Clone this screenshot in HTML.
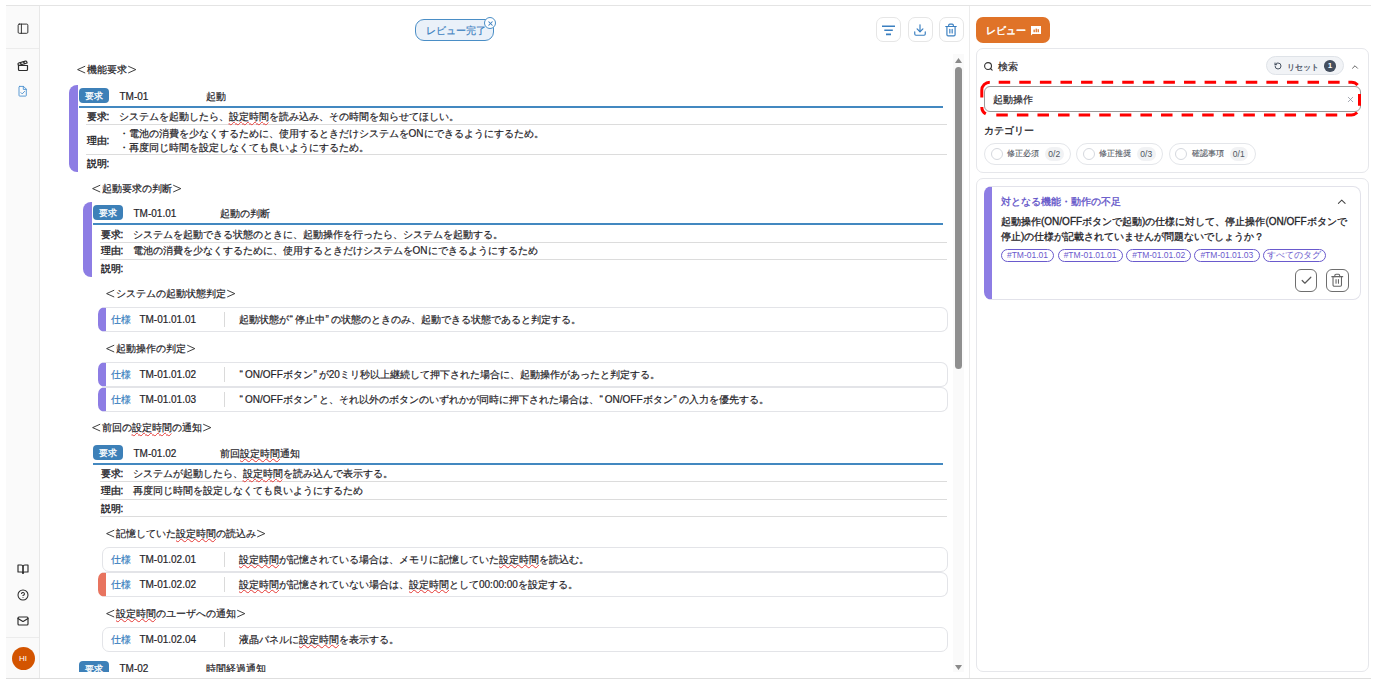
<!DOCTYPE html>
<html lang="ja">
<head>
<meta charset="utf-8">
<style>
*{box-sizing:border-box;margin:0;padding:0}
html,body{width:1377px;height:680px;overflow:hidden;background:#fff}
body{position:relative;font-family:"Liberation Sans",sans-serif;color:#1f2328;font-size:10px}
.a{position:absolute}
.t{position:absolute;white-space:nowrap;font-size:10px;line-height:12px;-webkit-text-stroke-width:0.2px}
.m{-webkit-text-stroke-width:0.4px}
svg.i{position:absolute;overflow:visible}
.br{display:inline-block;width:10px;height:12px;vertical-align:top}
.br svg{display:block}
.q{display:inline-block;width:6px;padding-left:0.6px}
.sq{text-decoration:underline wavy #e53935;text-decoration-thickness:1.2px;text-underline-offset:1px;text-decoration-skip-ink:none}
.badge{position:absolute;width:30px;height:15px;border-radius:4px;background:#3d80b8;color:#fff;font-size:9px;line-height:16px;text-align:center;-webkit-text-stroke-width:0.3px}
.card{position:absolute;height:25px;border:1px solid #e3e4e8;border-radius:7px;background:#fff}
</style>
</head>
<body>

<div class="a" style="left:6px;top:5px;width:1365px;height:1px;background:#e4e4e4"></div>
<div class="a" style="left:6px;top:678px;width:1365px;height:1px;background:#dedede"></div>
<div class="a" style="left:6px;top:6px;width:34px;height:672px;background:#fafafa;border-right:1px solid #e8e8e8"></div>
<div class="a" style="left:6px;top:48px;width:33px;height:1px;background:#ececec"></div>
<div class="a" style="left:6px;top:637px;width:33px;height:1px;background:#ececec"></div>
<div class="a" style="left:969px;top:6px;width:1px;height:672px;background:#ececec"></div>
<div class="a" style="left:0;top:0;width:964px;height:672px;overflow:hidden">
<div class="t" style="left:76.5px;top:64px;"><span class="br"><svg width="10" height="12"><path d="M8.2 2.2 L0.6 5.6 L8.2 9.0" fill="none" stroke="#2a2a2a" stroke-width="0.9"/></svg></span>機能要求<span class="br"><svg width="10" height="12"><path d="M1.2 2.2 L8.8 5.6 L1.2 9.0" fill="none" stroke="#2a2a2a" stroke-width="0.9"/></svg></span></div>
<div class="badge" style="left:79px;top:88px">要求</div>
<div class="t" style="left:119.5px;top:90.5px;">TM-01</div>
<div class="t" style="left:206px;top:90.5px;">起動</div>
<div class="a" style="left:79px;top:106px;width:863.5px;height:2px;background:#4388c0"></div>
<div class="a" style="left:86.0px;top:124px;width:860.5px;height:1px;background:#dcdcdc"></div>
<div class="a" style="left:86.0px;top:154px;width:860.5px;height:1px;background:#dcdcdc"></div>
<div class="t" style="left:86.5px;top:110.7px;-webkit-text-stroke-width:0.35px">要求:</div>
<div class="t" style="left:118.5px;top:110.7px;">システムを起動したら、<span class="sq">設定時間</span>を読み込み、その時間を知らせてほしい。</div>
<div class="t" style="left:86.5px;top:135px;-webkit-text-stroke-width:0.35px">理由:</div>
<div class="t" style="left:118.5px;top:128.4px;">・電池の消費を少なくするために、使用するときだけシステムをONにできるようにするため。</div>
<div class="t" style="left:118.5px;top:141.9px;">・再度同じ時間を設定しなくても良いようにするため。</div>
<div class="t" style="left:86.5px;top:158px;-webkit-text-stroke-width:0.35px">説明:</div>
<div class="a" style="left:69px;top:85px;width:9px;height:87px;background:#8d7de4;border-radius:8px 0 0 8px"></div>
<div class="t" style="left:91.5px;top:183px;"><span class="br"><svg width="10" height="12"><path d="M8.2 2.2 L0.6 5.6 L8.2 9.0" fill="none" stroke="#2a2a2a" stroke-width="0.9"/></svg></span>起動要求の判断<span class="br"><svg width="10" height="12"><path d="M1.2 2.2 L8.8 5.6 L1.2 9.0" fill="none" stroke="#2a2a2a" stroke-width="0.9"/></svg></span></div>
<div class="badge" style="left:93px;top:205px">要求</div>
<div class="t" style="left:133.5px;top:207.5px;">TM-01.01</div>
<div class="t" style="left:220px;top:207.5px;">起動の判断</div>
<div class="a" style="left:93px;top:223px;width:849.5px;height:2px;background:#4388c0"></div>
<div class="a" style="left:100.0px;top:242px;width:846.5px;height:1px;background:#dcdcdc"></div>
<div class="a" style="left:100.0px;top:259px;width:846.5px;height:1px;background:#dcdcdc"></div>
<div class="t" style="left:100.5px;top:228.8px;-webkit-text-stroke-width:0.35px">要求:</div>
<div class="t" style="left:132.5px;top:228.8px;">システムを起動できる状態のときに、起動操作を行ったら、システムを起動する。</div>
<div class="t" style="left:100.5px;top:245.3px;-webkit-text-stroke-width:0.35px">理由:</div>
<div class="t" style="left:132.5px;top:245.3px;">電池の消費を少なくするために、使用するときだけシステムをONにできるようにするため</div>
<div class="t" style="left:100.5px;top:263.4px;-webkit-text-stroke-width:0.35px">説明:</div>
<div class="a" style="left:83px;top:202px;width:9px;height:75px;background:#8d7de4;border-radius:8px 0 0 8px"></div>
<div class="t" style="left:106px;top:288px;"><span class="br"><svg width="10" height="12"><path d="M8.2 2.2 L0.6 5.6 L8.2 9.0" fill="none" stroke="#2a2a2a" stroke-width="0.9"/></svg></span>システムの起動状態判定<span class="br"><svg width="10" height="12"><path d="M1.2 2.2 L8.8 5.6 L1.2 9.0" fill="none" stroke="#2a2a2a" stroke-width="0.9"/></svg></span></div>
<div class="card" style="left:97.5px;top:307px;width:850.5px;border-left:8.5px solid #8d7de4"></div>
<div class="t" style="left:110.8px;top:314px;color:#3a7fc0">仕様</div>
<div class="t" style="left:139.4px;top:314px;">TM-01.01.01</div>
<div class="a" style="left:224px;top:312px;width:1px;height:15px;background:#dadada"></div>
<div class="t" style="left:239px;top:314px;">起動状態が<span class="q">“</span>停止中<span class="q">”</span>の状態のときのみ、起動できる状態であると判定する。</div>
<div class="t" style="left:106px;top:342.5px;"><span class="br"><svg width="10" height="12"><path d="M8.2 2.2 L0.6 5.6 L8.2 9.0" fill="none" stroke="#2a2a2a" stroke-width="0.9"/></svg></span>起動操作の判定<span class="br"><svg width="10" height="12"><path d="M1.2 2.2 L8.8 5.6 L1.2 9.0" fill="none" stroke="#2a2a2a" stroke-width="0.9"/></svg></span></div>
<div class="card" style="left:97.5px;top:362px;width:850.5px;border-left:8.5px solid #8d7de4"></div>
<div class="t" style="left:110.8px;top:369px;color:#3a7fc0">仕様</div>
<div class="t" style="left:139.4px;top:369px;">TM-01.01.02</div>
<div class="a" style="left:224px;top:367px;width:1px;height:15px;background:#dadada"></div>
<div class="t" style="left:239px;top:369px;"><span class="q">“</span>ON/OFFボタン<span class="q">”</span>が20ミリ秒以上継続して押下された場合に、起動操作があったと判定する。</div>
<div class="card" style="left:97.5px;top:386.5px;width:850.5px;border-left:8.5px solid #8d7de4"></div>
<div class="t" style="left:110.8px;top:393.5px;color:#3a7fc0">仕様</div>
<div class="t" style="left:139.4px;top:393.5px;">TM-01.01.03</div>
<div class="a" style="left:224px;top:391.5px;width:1px;height:15px;background:#dadada"></div>
<div class="t" style="left:239px;top:393.5px;"><span class="q">“</span>ON/OFFボタン<span class="q">”</span>と、それ以外のボタンのいずれかが同時に押下された場合は、<span class="q">“</span>ON/OFFボタン<span class="q">”</span>の入力を優先する。</div>
<div class="t" style="left:91.5px;top:421.5px;"><span class="br"><svg width="10" height="12"><path d="M8.2 2.2 L0.6 5.6 L8.2 9.0" fill="none" stroke="#2a2a2a" stroke-width="0.9"/></svg></span>前回の<span class="sq">設定時間</span>の通知<span class="br"><svg width="10" height="12"><path d="M1.2 2.2 L8.8 5.6 L1.2 9.0" fill="none" stroke="#2a2a2a" stroke-width="0.9"/></svg></span></div>
<div class="badge" style="left:93px;top:445px">要求</div>
<div class="t" style="left:133.5px;top:447.5px;">TM-01.02</div>
<div class="t" style="left:220px;top:447.5px;">前回<span class="sq">設定時間</span>通知</div>
<div class="a" style="left:93px;top:463px;width:849.5px;height:2px;background:#4388c0"></div>
<div class="a" style="left:100.0px;top:481px;width:846.5px;height:1px;background:#dcdcdc"></div>
<div class="a" style="left:100.0px;top:499px;width:846.5px;height:1px;background:#dcdcdc"></div>
<div class="a" style="left:100.0px;top:516px;width:846.5px;height:1px;background:#dcdcdc"></div>
<div class="t" style="left:100.5px;top:467.9px;-webkit-text-stroke-width:0.35px">要求:</div>
<div class="t" style="left:132.5px;top:467.9px;">システムが起動したら、<span class="sq">設定時間</span>を読み込んで表示する。</div>
<div class="t" style="left:100.5px;top:485.2px;-webkit-text-stroke-width:0.35px">理由:</div>
<div class="t" style="left:132.5px;top:485.2px;">再度同じ時間を設定しなくても良いようにするため</div>
<div class="t" style="left:100.5px;top:502.6px;-webkit-text-stroke-width:0.35px">説明:</div>
<div class="t" style="left:106px;top:527.5px;"><span class="br"><svg width="10" height="12"><path d="M8.2 2.2 L0.6 5.6 L8.2 9.0" fill="none" stroke="#2a2a2a" stroke-width="0.9"/></svg></span>記憶していた<span class="sq">設定時間</span>の読込み<span class="br"><svg width="10" height="12"><path d="M1.2 2.2 L8.8 5.6 L1.2 9.0" fill="none" stroke="#2a2a2a" stroke-width="0.9"/></svg></span></div>
<div class="card" style="left:102px;top:547px;width:846px"></div>
<div class="t" style="left:110.8px;top:554px;color:#3a7fc0">仕様</div>
<div class="t" style="left:139.4px;top:554px;">TM-01.02.01</div>
<div class="a" style="left:224px;top:552px;width:1px;height:15px;background:#dadada"></div>
<div class="t" style="left:239px;top:554px;"><span class="sq">設定時間</span>が記憶されている場合は、メモリに記憶していた<span class="sq">設定時間</span>を読込む。</div>
<div class="card" style="left:97.5px;top:571.5px;width:850.5px;border-left:8.5px solid #e8745f"></div>
<div class="t" style="left:110.8px;top:578.5px;color:#3a7fc0">仕様</div>
<div class="t" style="left:139.4px;top:578.5px;">TM-01.02.02</div>
<div class="a" style="left:224px;top:576.5px;width:1px;height:15px;background:#dadada"></div>
<div class="t" style="left:239px;top:578.5px;"><span class="sq">設定時間</span>が記憶されていない場合は、<span class="sq">設定時間</span>として00:00:00を設定する。</div>
<div class="t" style="left:106px;top:607.5px;"><span class="br"><svg width="10" height="12"><path d="M8.2 2.2 L0.6 5.6 L8.2 9.0" fill="none" stroke="#2a2a2a" stroke-width="0.9"/></svg></span><span class="sq">設定時間</span>のユーザへの通知<span class="br"><svg width="10" height="12"><path d="M1.2 2.2 L8.8 5.6 L1.2 9.0" fill="none" stroke="#2a2a2a" stroke-width="0.9"/></svg></span></div>
<div class="card" style="left:102px;top:627px;width:846px"></div>
<div class="t" style="left:110.8px;top:634px;color:#3a7fc0">仕様</div>
<div class="t" style="left:139.4px;top:634px;">TM-01.02.04</div>
<div class="a" style="left:224px;top:632px;width:1px;height:15px;background:#dadada"></div>
<div class="t" style="left:239px;top:634px;">液晶パネルに<span class="sq">設定時間</span>を表示する。</div>
<div class="badge" style="left:79px;top:661px">要求</div>
<div class="t" style="left:119.5px;top:663px;">TM-02</div>
<div class="t" style="left:206px;top:663px;">時間経過通知</div>
</div>
<div class="a" style="left:953px;top:54px;width:11px;height:618px;background:#fafafa"></div>
<svg class="i" style="left:955px;top:58px" width="7" height="5"><path d="M3.5 0 L7 5 L0 5Z" fill="#8a8a8a"/></svg>
<div class="a" style="left:955px;top:67px;width:7px;height:302px;background:#8f8f8f;border-radius:3.5px"></div>
<svg class="i" style="left:955px;top:665px" width="7" height="5"><path d="M0 0 L7 0 L3.5 5Z" fill="#8a8a8a"/></svg>
<svg class="i" style="left:17px;top:23px" width="12" height="12" viewBox="0 0 24 24" fill="none" stroke="#2b2b2b" stroke-width="1.9" stroke-linecap="round" stroke-linejoin="round"><rect width="19.4" height="18.4" x="2.3" y="2.2" rx="2.2"/><path d="M8.8 2.2v18.4"/></svg>
<svg class="i" style="left:17px;top:59.5px" width="12" height="12" viewBox="0 0 24 24" fill="none" stroke="#2b2b2b" stroke-width="2.4" stroke-linecap="round" stroke-linejoin="round"><path d="M20.2 6 3 11l-.9-2.4c-.3-1.1.3-2.2 1.3-2.5l13.5-4c1.1-.3 2.2.3 2.5 1.3Z"/><path d="m6.2 5.3 3.1 3.9"/><path d="m12.4 3.4 3.1 4"/><path d="M3 11h18v8a2 2 0 0 1-2 2H5a2 2 0 0 1-2-2Z"/></svg>
<svg class="i" style="left:0;top:0" width="1" height="1"><path d="M19.7 86.4H23.6L26.3 89.1V95.4Q26.3 96.1 25.6 96.1H19.7Q19 96.1 19 95.4V87.1Q19 86.4 19.7 86.4Z M23.3 86.4V89.4H26.3 M20.9 92.6L22.2 93.9L24.6 91.4" fill="none" stroke="#4a90d0" stroke-width="0.9" stroke-linejoin="round" stroke-linecap="round"/></svg>
<svg class="i" style="left:17px;top:563px" width="12" height="12" viewBox="0 0 24 24" fill="none" stroke="#2b2b2b" stroke-width="2.3" stroke-linecap="round" stroke-linejoin="round"><path d="M2 4h6a4 4 0 0 1 4 4v13a3 3 0 0 0-3-3H2z"/><path d="M22 4h-6a4 4 0 0 0-4 4v13a3 3 0 0 1 3-3h7z"/></svg>
<svg class="i" style="left:17px;top:589px" width="12" height="12" viewBox="0 0 24 24" fill="none" stroke="#2b2b2b" stroke-width="2.1" stroke-linecap="round" stroke-linejoin="round"><circle cx="12" cy="12" r="10"/><path d="M9.09 9a3 3 0 0 1 5.83 1c0 2-3 3-3 3"/><path d="M12 17h.01"/></svg>
<svg class="i" style="left:17px;top:614.5px" width="12" height="12" viewBox="0 0 24 24" fill="none" stroke="#2b2b2b" stroke-width="2.3" stroke-linecap="round" stroke-linejoin="round"><rect width="20" height="16" x="2" y="4" rx="2"/><path d="m22 7-8.97 5.7a1.94 1.94 0 0 1-2.06 0L2 7"/></svg>
<div class="a" style="left:11.5px;top:646.5px;width:23px;height:23px;border-radius:50%;background:#d35400;color:#fff;font-size:8px;line-height:23px;text-align:center">HI</div>
<div class="a" style="left:415px;top:19px;width:79px;height:22px;border:1px solid #4a8ec6;border-radius:9px;background:#eaf1f9"></div>
<div class="t" style="left:426px;top:24.5px;color:#3a7fc0;font-size:10px">レビュー完了</div>
<div class="a" style="left:484px;top:17px;width:12px;height:12px;border:1px solid #4a8ec6;border-radius:50%;background:#fff"></div>
<svg class="i" style="left:486.5px;top:19.5px" width="7" height="7" viewBox="0 0 24 24" fill="none" stroke="#3a7fc0" stroke-width="3.6" stroke-linecap="round" stroke-linejoin="round"><path d="M18 6 6 18"/><path d="m6 6 12 12"/></svg>
<div class="a" style="left:876px;top:17px;width:25px;height:25px;border:1px solid #e6e6e6;border-radius:7px;background:#fff"></div>
<div class="a" style="left:907.5px;top:17px;width:25px;height:25px;border:1px solid #e6e6e6;border-radius:7px;background:#fff"></div>
<div class="a" style="left:939px;top:17px;width:25px;height:25px;border:1px solid #e6e6e6;border-radius:7px;background:#fff"></div>
<svg class="i" style="left:0;top:0" width="1" height="1"><path d="M882 26.2H895M884.3 30.3H892.8M886 34.4H891" stroke="#3a7fc0" stroke-width="1.6"/></svg>
<svg class="i" style="left:913px;top:23px" width="14" height="14" viewBox="0 0 24 24" fill="none" stroke="#3a7fc0" stroke-width="2" stroke-linecap="round" stroke-linejoin="round"><path d="M21 15v4a2 2 0 0 1-2 2H5a2 2 0 0 1-2-2v-4"/><path d="m7 10 5 5 5-5"/><path d="M12 15V3"/></svg>
<svg class="i" style="left:943.5px;top:22.5px" width="14" height="14" viewBox="0 0 24 24" fill="none" stroke="#3a7fc0" stroke-width="2" stroke-linecap="round" stroke-linejoin="round"><path d="M3 6h18"/><path d="M19 6v14c0 1-1 2-2 2H7c-1 0-2-1-2-2V6"/><path d="M8 6V4c0-1 1-2 2-2h4c1 0 2 1 2 2v2"/><path d="M10 11v6"/><path d="M14 11v6"/></svg>
<div class="a" style="left:976px;top:17px;width:74px;height:26px;border-radius:7px;background:#e07328"></div>
<div class="t" style="left:985.5px;top:24.5px;color:#fff;font-size:9.5px;-webkit-text-stroke-width:0.45px">レビュー</div>
<svg class="i" style="left:1030.5px;top:25.5px" width="10" height="9.5" viewBox="0 0 10 9.5"><path d="M0 0H10V8H1.5L0 9.5Z" fill="#fff"/><rect x="2.5" y="3.6" width="1.3" height="2.6" fill="#e07328"/><rect x="4.6" y="2.6" width="1.3" height="3.6" fill="#e07328"/><rect x="6.6" y="3.2" width="1.3" height="3" fill="#e07328"/></svg>
<div class="a" style="left:976px;top:48px;width:392.5px;height:124.5px;border:1px solid #e6e7eb;border-radius:7px;background:#fff"></div>
<svg class="i" style="left:983px;top:60.5px" width="11" height="11" viewBox="0 0 24 24" fill="none" stroke="#333" stroke-width="2.4" stroke-linecap="round" stroke-linejoin="round"><circle cx="11" cy="11" r="7.5"/><path d="m20 20-4-4"/></svg>
<div class="t" style="left:998px;top:61px;-webkit-text-stroke-width:0.2px">検索</div>
<div class="a" style="left:1265.5px;top:56px;width:78px;height:18.5px;border:1px solid #dfe3e8;border-radius:10px;background:#f1f3f6"></div>
<svg class="i" style="left:1273.5px;top:61.5px" width="8" height="8" viewBox="0 0 24 24" fill="none" stroke="#3b4656" stroke-width="2.8" stroke-linecap="round" stroke-linejoin="round"><path d="M3 12a9 9 0 1 0 9-9 9.75 9.75 0 0 0-6.74 2.74L3 8"/><path d="M3 3v5h5"/></svg>
<div class="t" style="left:1287px;top:60.5px;font-size:8.4px;color:#3b4656">リセット</div>
<div class="a" style="left:1324.2px;top:60px;width:11.5px;height:11.5px;border-radius:50%;background:#434e5e;color:#fff;font-size:8px;line-height:11.5px;text-align:center;font-weight:bold">1</div>
<svg class="i" style="left:1350px;top:62px" width="10" height="10" viewBox="0 0 24 24" fill="none" stroke="#555" stroke-width="2.2" stroke-linecap="round" stroke-linejoin="round"><path d="m18 15-6-6-6 6"/></svg>
<div class="a" style="left:984px;top:86px;width:377px;height:26px;border:1px solid #9a9a9a;border-radius:6px;background:#fff"></div>
<div class="t" style="left:993px;top:94px;-webkit-text-stroke-width:0.2px">起動操作</div>
<svg class="i" style="left:0;top:0" width="1" height="1"><path d="M981.8 97.6V90.2A8 8 0 0 1 989.8 82.2H989.5M998.70 82.2H1010.20M1019.29 82.2H1030.79M1039.88 82.2H1051.38M1060.47 82.2H1071.97M1081.06 82.2H1092.56M1101.65 82.2H1113.15M1122.24 82.2H1133.74M1142.83 82.2H1154.33M1163.42 82.2H1174.92M1184.01 82.2H1195.51M1204.60 82.2H1216.10M1225.19 82.2H1236.69M1245.78 82.2H1257.28M1266.37 82.2H1277.87M1286.96 82.2H1298.46M1307.55 82.2H1319.05M1328.14 82.2H1339.64M1348.4 82.2H1351.5A8 8 0 0 1 1357.63 85.06M1359.5 93.9V105.8M1346 114.9H1351.5A8 8 0 0 0 1357.16 112.56M996.30 114.9H1007.80M1016.89 114.9H1028.39M1037.48 114.9H1048.98M1058.07 114.9H1069.57M1078.66 114.9H1090.16M1099.25 114.9H1110.75M1119.84 114.9H1131.34M1140.43 114.9H1151.93M1161.02 114.9H1172.52M1181.61 114.9H1193.11M1202.20 114.9H1213.70M1222.79 114.9H1234.29M1243.38 114.9H1254.88M1263.97 114.9H1275.47M1284.56 114.9H1296.06M1305.15 114.9H1316.65M1325.74 114.9H1337.24M981.8 107V106.9A8 8 0 0 0 985.80 113.83" fill="none" stroke="#ff0000" stroke-width="3"/></svg>
<svg class="i" style="left:1345.5px;top:94.5px" width="9" height="9" viewBox="0 0 24 24" fill="none" stroke="#7c8290" stroke-width="1.8" stroke-linecap="round" stroke-linejoin="round"><path d="M18 6 6 18"/><path d="m6 6 12 12"/></svg>
<div class="t" style="left:984px;top:125px;-webkit-text-stroke-width:0.3px">カテゴリー</div>
<div class="a" style="left:984px;top:143px;width:87px;height:21.5px;border:1px solid #e4e6ea;border-radius:11px;background:#fff"></div>
<div class="a" style="left:990.5px;top:147.5px;width:12px;height:12px;border:1px solid #d5d8de;border-radius:50%"></div>
<div class="t" style="left:1007px;top:147.5px;font-size:8.2px;color:#4f5560;-webkit-text-stroke-width:0.1px">修正必須</div>
<div class="a" style="left:1045px;top:146.5px;width:18.5px;height:14px;border-radius:7px;background:#f1f2f4;color:#4f5560;font-size:8.5px;line-height:14px;text-align:center">0/2</div>
<div class="a" style="left:1076px;top:143px;width:87px;height:21.5px;border:1px solid #e4e6ea;border-radius:11px;background:#fff"></div>
<div class="a" style="left:1082.5px;top:147.5px;width:12px;height:12px;border:1px solid #d5d8de;border-radius:50%"></div>
<div class="t" style="left:1099px;top:147.5px;font-size:8.2px;color:#4f5560;-webkit-text-stroke-width:0.1px">修正推奨</div>
<div class="a" style="left:1137px;top:146.5px;width:18.5px;height:14px;border-radius:7px;background:#f1f2f4;color:#4f5560;font-size:8.5px;line-height:14px;text-align:center">0/3</div>
<div class="a" style="left:1168.5px;top:143px;width:87px;height:21.5px;border:1px solid #e4e6ea;border-radius:11px;background:#fff"></div>
<div class="a" style="left:1175.0px;top:147.5px;width:12px;height:12px;border:1px solid #d5d8de;border-radius:50%"></div>
<div class="t" style="left:1191.5px;top:147.5px;font-size:8.2px;color:#4f5560;-webkit-text-stroke-width:0.1px">確認事項</div>
<div class="a" style="left:1229.5px;top:146.5px;width:18.5px;height:14px;border-radius:7px;background:#f1f2f4;color:#4f5560;font-size:8.5px;line-height:14px;text-align:center">0/1</div>
<div class="a" style="left:976px;top:178px;width:392.5px;height:493.5px;border:1px solid #e6e7eb;border-radius:7px;background:#fff"></div>
<div class="a" style="left:984px;top:186px;width:376.5px;height:113.5px;border:1px solid #e2e2ea;border-left:8px solid #8d7de4;border-radius:8px;background:#fff"></div>
<div class="t" style="left:1001px;top:195.5px;color:#6152c8;-webkit-text-stroke-width:0.3px">対となる機能・動作の不足</div>
<svg class="i" style="left:1334.8px;top:195px" width="13.5" height="13.5" viewBox="0 0 24 24" fill="none" stroke="#444" stroke-width="1.8" stroke-linecap="round" stroke-linejoin="round"><path d="m18 15-6-6-6 6"/></svg>
<div class="t" style="left:1001px;top:216px;-webkit-text-stroke-width:0.3px">起動操作(ON/OFFボタンで起動)の仕様に対して、停止操作(ON/OFFボタンで</div>
<div class="t" style="left:1001px;top:230.5px;-webkit-text-stroke-width:0.3px">停止)の仕様が記載されていませんが問題ないでしょうか？</div>
<div class="a" style="left:1001px;top:249px;width:53px;height:13px;border:1px solid #6a5acd;border-radius:7px;color:#6a5acd;font-size:8.5px;line-height:11px;text-align:center;white-space:nowrap">#TM-01.01</div>
<div class="a" style="left:1057.5px;top:249px;width:65.20000000000005px;height:13px;border:1px solid #6a5acd;border-radius:7px;color:#6a5acd;font-size:8.5px;line-height:11px;text-align:center;white-space:nowrap">#TM-01.01.01</div>
<div class="a" style="left:1126.4px;top:249px;width:64.59999999999991px;height:13px;border:1px solid #6a5acd;border-radius:7px;color:#6a5acd;font-size:8.5px;line-height:11px;text-align:center;white-space:nowrap">#TM-01.01.02</div>
<div class="a" style="left:1194px;top:249px;width:65.70000000000005px;height:13px;border:1px solid #6a5acd;border-radius:7px;color:#6a5acd;font-size:8.5px;line-height:11px;text-align:center;white-space:nowrap">#TM-01.01.03</div>
<div class="a" style="left:1262.5px;top:249px;width:63.09999999999991px;height:13px;border:1px solid #6a5acd;border-radius:7px;color:#6a5acd;font-size:8.5px;line-height:11px;text-align:center;white-space:nowrap">すべてのタグ</div>
<div class="a" style="left:1294.5px;top:269px;width:22.5px;height:22.5px;border:1px solid #6e6e6e;border-radius:6px;background:#fff"></div>
<svg class="i" style="left:1299.5px;top:273.5px" width="13" height="13" viewBox="0 0 24 24" fill="none" stroke="#5a5a5a" stroke-width="2.2" stroke-linecap="round" stroke-linejoin="round"><path d="M20 6 9 17l-5-5"/></svg>
<div class="a" style="left:1326px;top:269px;width:22.5px;height:22.5px;border:1px solid #6e6e6e;border-radius:6px;background:#fff"></div>
<svg class="i" style="left:1330px;top:273px" width="14.5" height="14.5" viewBox="0 0 24 24" fill="none" stroke="#666" stroke-width="1.8" stroke-linecap="round" stroke-linejoin="round"><path d="M3 6h18"/><path d="M19 6v14c0 1-1 2-2 2H7c-1 0-2-1-2-2V6"/><path d="M8 6V4c0-1 1-2 2-2h4c1 0 2 1 2 2v2"/><path d="M10 11v6"/><path d="M14 11v6"/></svg>
</body>
</html>
